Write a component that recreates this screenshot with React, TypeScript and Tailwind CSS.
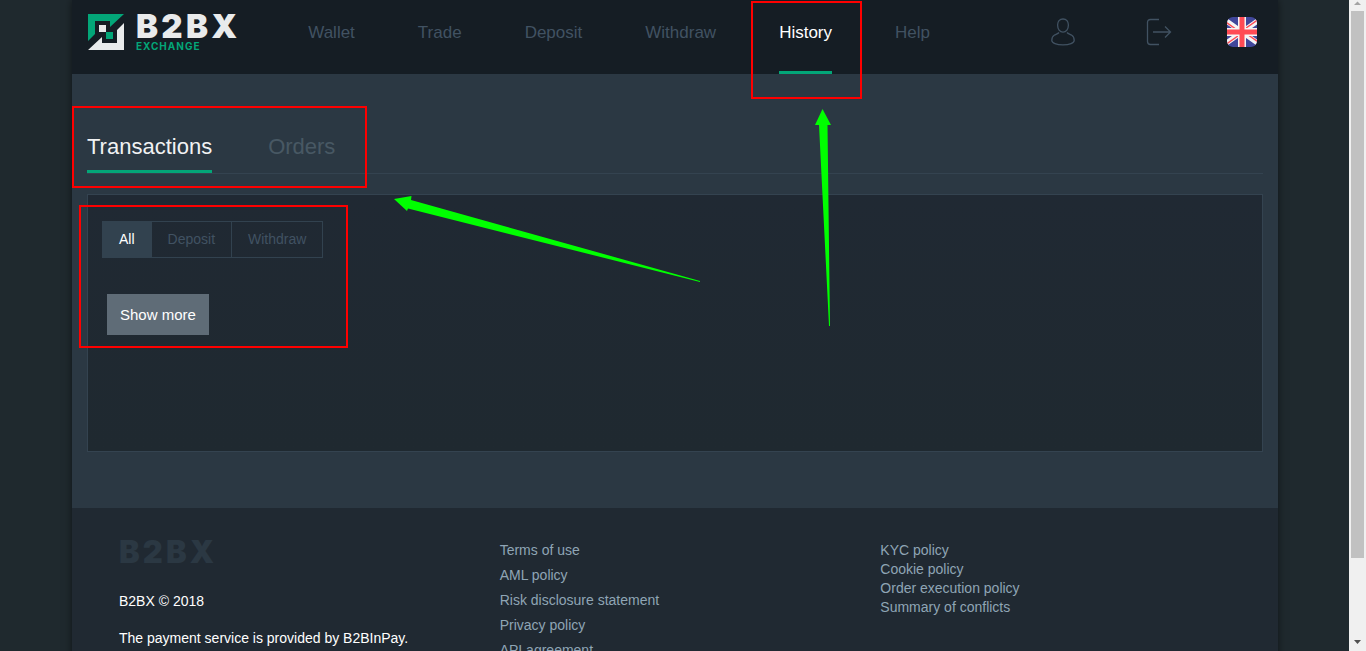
import React, { useState } from 'react';
import clsx from 'clsx';

const navItems = ['Wallet', 'Trade', 'Deposit', 'Withdraw', 'History', 'Help'];
const filters = ['All', 'Deposit', 'Withdraw'];
const legalLinks = ['Terms of use', 'AML policy', 'Risk disclosure statement', 'Privacy policy', 'API agreement'];
const policyLinks = ['KYC policy', 'Cookie policy', 'Order execution policy', 'Summary of conflicts'];

const LogoMark: React.FC = () => (
  <svg width="36" height="36" viewBox="0 0 36 36" className="shrink-0" aria-hidden="true">
    <path d="M0 0H36L22 13V7H7V20L0 27Z" fill="#03a678" />
    <path d="M36 9V36H0L14 23V29H29V16Z" fill="#e9ebec" />
    <path d="M11 11H18V18H11Z" fill="#e9ebec" />
    <path d="M18 18H25V25H18Z" fill="#03a678" />
  </svg>
);

const UserIcon: React.FC = () => (
  <svg width="24" height="28" viewBox="0 0 24 28" fill="none" stroke="#415262" strokeWidth="1.3" aria-hidden="true">
    <path d="M12 1C8.600 1 6.600 3.400 6.600 7C6.600 11 8.800 14.200 12 14.200C15.200 14.200 17.400 11 17.400 7C17.400 3.400 15.400 1 12 1Z" />
    <path d="M8 14.500C7 15.800 5 16.200 3.200 17.200C1.300 18.300 .8 20 .8 22.500C.8 25 5.500 26.800 12 26.800C18.500 26.800 23.200 25 23.200 22.500C23.200 20 22.700 18.300 20.800 17.200C19 16.200 17 15.800 16 14.500" />
  </svg>
);

const LogoutIcon: React.FC = () => (
  <svg width="26" height="28" viewBox="0 0 26 28" fill="none" stroke="#415262" strokeWidth="1.3" aria-hidden="true">
    <path d="M13 1.500H4.500C2.500 1.500 1.500 2.500 1.500 4.500V23.500C1.500 25.500 2.500 26.500 4.500 26.500H13" />
    <path d="M7 14H24.500M19 8.500L24.500 14L19 19.500" />
  </svg>
);

const FlagIcon: React.FC = () => (
  <svg width="30" height="30" viewBox="0 0 30 30" aria-hidden="true">
    <defs>
      <clipPath id="flag-shape">
        <rect width="30" height="30" rx="6" />
      </clipPath>
    </defs>
    <g clipPath="url(#flag-shape)">
      <rect width="30" height="30" fill="#41479b" />
      <path d="M-2 3L32 27M32 3L-2 27" stroke="#f5f5f5" strokeWidth="5" />
      <path d="M-2 4.500L13 15M32 2L17 12.500M-2 28L13 17.500M32 25.500L17 15" stroke="#ff4b55" strokeWidth="1.500" />
      <path d="M15 0V30M0 15H30" stroke="#f5f5f5" strokeWidth="8" />
      <path d="M15 0V30M0 15H30" stroke="#ff4b55" strokeWidth="5" />
    </g>
  </svg>
);

const Header: React.FC = () => (
  <header className="flex h-[74px] items-start bg-[#151d24] pl-4 pr-[21px]">
    <a href="#" className="mt-3.5 flex items-start gap-3">
      <LogoMark />
      <span className="flex flex-col font-['Inter']">
        <span className="text-[33px] font-black leading-[24px] tracking-widest text-[#e9ebec]">B2BX</span>
        <span className="text-[10px] font-bold leading-[17px] tracking-widest text-[#03a678]">EXCHANGE</span>
      </span>
    </a>
    <nav className="ml-auto flex h-full gap-[63px] text-[17px]">
      {navItems.map((item) => (
        <a
          key={item}
          href="#"
          className={clsx(
            'h-full border-b-[3px] pt-[21px] leading-6',
            item === 'History' ? 'border-[#03a678] text-white' : 'border-transparent text-[#415262]'
          )}
        >
          {item}
        </a>
      ))}
    </nav>
    <div className="ml-[121px] flex h-16 items-center">
      <button aria-label="Profile" className="mr-[71px]">
        <UserIcon />
      </button>
      <button aria-label="Log out" className="mr-[55px]">
        <LogoutIcon />
      </button>
      <button aria-label="Language">
        <FlagIcon />
      </button>
    </div>
  </header>
);

const History: React.FC = () => {
  const [filter, setFilter] = useState('All');

  return (
    <main className="bg-[#2b3843] px-[15px] pb-14 pt-14">
      <div className="flex h-[44px] items-stretch gap-14 border-b border-[#344350] text-[22px] leading-[30px]">
        <button className="border-b-[3px] border-[#03a678] pb-1.5 text-[#f1f2f3]">Transactions</button>
        <button className="border-b-[3px] border-transparent pb-1.5 text-[#485864]">Orders</button>
      </div>

      <section className="mt-5 min-h-[258px] border border-[#344350] bg-gradient-to-b from-[#202933] to-[#1f2930] px-3.5 pt-[26px]">
        <div className="inline-flex h-[37px] border border-[#32424f] pb-px text-sm">
          {filters.map((name) => (
            <button
              key={name}
              onClick={() => setFilter(name)}
              className={clsx(
                '-mb-px border-r border-[#32424f] px-4 pb-0.5 last:border-r-0',
                name === filter ? 'bg-[#32424f] text-white' : 'text-[#415262]'
              )}
            >
              {name}
            </button>
          ))}
        </div>
        <div className="mt-9 pl-[5px]">
          <button className="h-[41px] bg-[#5f6c77] px-[13px] pt-0.5 text-[15px] text-white">Show more</button>
        </div>
      </section>
    </main>
  );
};

const Footer: React.FC = () => (
  <footer className="grid flex-1 grid-cols-3 bg-[#202932] px-8 pt-8 text-sm text-[#8fa5b5]">
    <div className="px-[15px] text-white">
      <p className="font-['Inter'] text-[31px] font-black leading-6 tracking-widest text-[#2b3843]">B2BX</p>
      <p className="mt-7 leading-[19px]">B2BX © 2018</p>
      <p className="mt-[18px] whitespace-nowrap leading-[19px]">The payment service is provided by B2BInPay.</p>
    </div>
    <ul className="px-[15px] pt-px leading-[19px]">
      {legalLinks.map((link) => (
        <li key={link} className="mb-1.5">
          <a href="#">{link}</a>
        </li>
      ))}
    </ul>
    <ul className="px-[15px] pt-px leading-[19px]">
      {policyLinks.map((link) => (
        <li key={link}>
          <a href="#">{link}</a>
        </li>
      ))}
    </ul>
  </footer>
);

const Scrollbar: React.FC = () => (
  <div className="flex h-full w-[17px] shrink-0 flex-col items-center bg-[#f0f0f0]" aria-hidden="true">
    <svg width="9" height="11" viewBox="0 0 9 11">
      <path d="M1 5L4.500 1.500L8 5Z" fill="#a3a3a3" />
    </svg>
    <div className="h-[84%] w-[13px] bg-[#c1c1c1]" />
    <svg width="9" height="11" viewBox="0 0 9 11" className="mt-auto">
      <path d="M1 0H8L4.500 4Z" fill="#505050" />
    </svg>
  </div>
);

// Red frames and green arrows pointing at the relevant controls
const Annotations: React.FC = () => (
  <div className="pointer-events-none absolute inset-0" aria-hidden="true">
    <div className="absolute left-[751px] top-px h-[98px] w-[111px] border-2 border-[#ff0000]" />
    <div className="absolute left-[72px] top-[106px] h-[82px] w-[295px] border-2 border-[#ff0000]" />
    <div className="absolute left-[79px] top-[205px] h-[143px] w-[269px] border-2 border-[#ff0000]" />
    <svg width="450" height="230" viewBox="390 105 450 230" className="absolute left-[390px] top-[105px]">
      <path d="M394 199L411.500 196L411 200L700 281L700 282L408 208.500L407 211Z" fill="#00ff00" />
      <path d="M822.500 109L831 125H827.500L830 326H829L819 125H815Z" fill="#00ff00" />
    </svg>
  </div>
);

const App: React.FC = () => {
  return (
    <div className="relative flex h-screen overflow-hidden bg-[#1f292e] font-['Liberation_Sans',sans-serif]">
      <div className="h-full min-w-0 flex-1 overflow-hidden pl-[72px] pr-[71px]">
        <div className="flex min-h-full flex-col shadow-[0_0_8px_rgba(0,0,0,0.5)]">
          <Header />
          <History />
          <Footer />
        </div>
      </div>
      <Scrollbar />
      <Annotations />
    </div>
  );
};

export default App;
